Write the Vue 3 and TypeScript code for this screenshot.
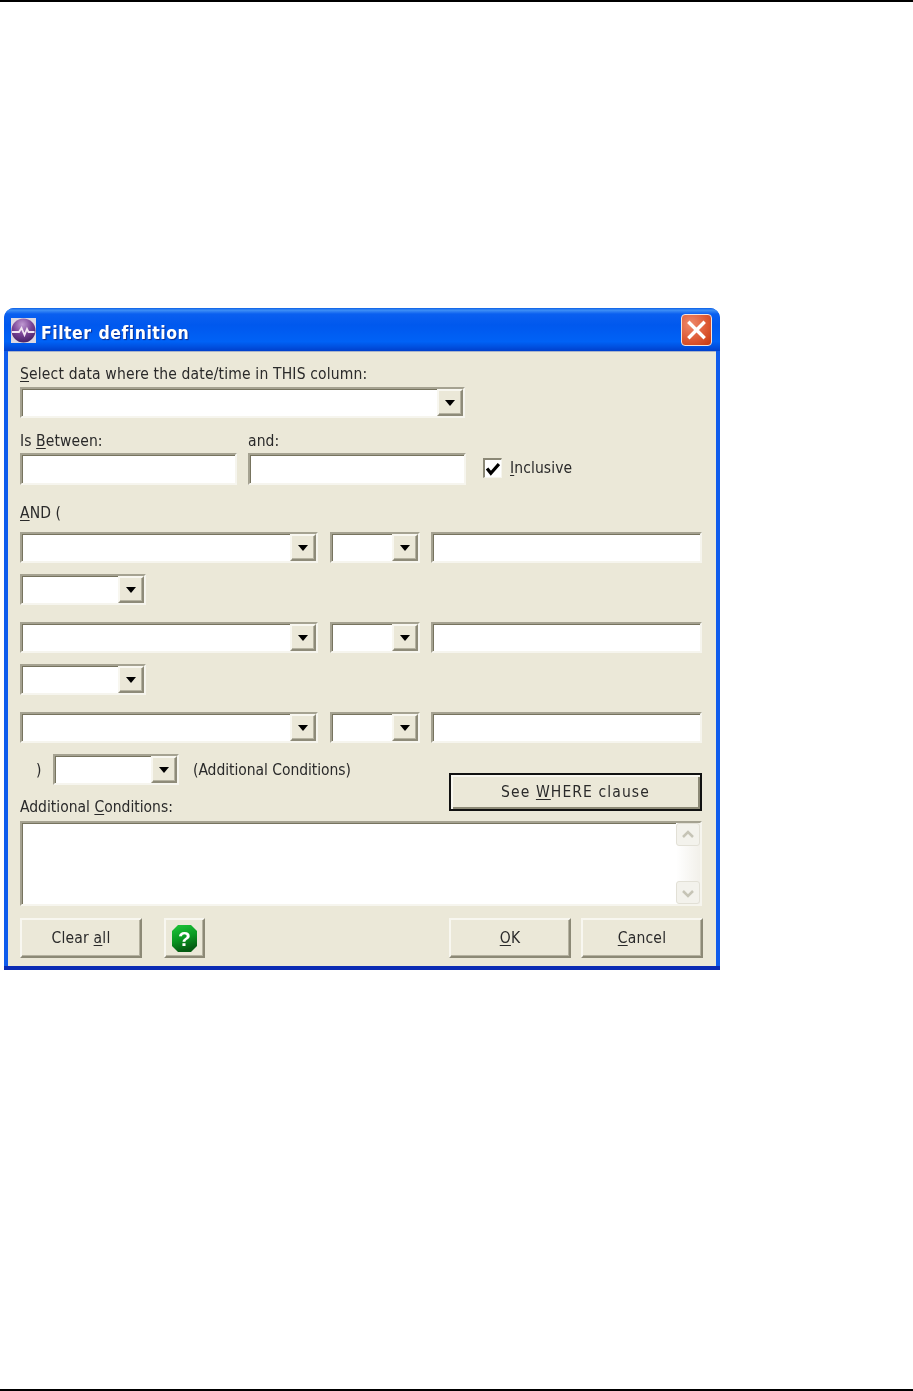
<script setup lang="ts">
const conditionRows = [
  { id: 1, joiner: true },
  { id: 2, joiner: true },
  { id: 3, joiner: false },
]
</script>

<template>
  <div class="page">
    <div class="dialog">
      <div class="titlebar">
        <svg class="app-icon" viewBox="0 0 25 25" width="25" height="25">
          <defs>
            <radialGradient id="orb" cx="0.45" cy="0.25" r="0.8">
              <stop offset="0" stop-color="#c09ad2" />
              <stop offset="0.5" stop-color="#7a4496" />
              <stop offset="1" stop-color="#401d60" />
            </radialGradient>
          </defs>
          <rect width="25" height="25" fill="#dcd8e2" />
          <circle cx="12.5" cy="12.5" r="12" fill="url(#orb)" />
          <path d="M1 14h7l2.500-4 3 7 2.500-6 1.500 3h6" fill="none" stroke="#f2e6f2" stroke-width="1.800" />
        </svg>
        <span class="title">Filter definition</span>
        <button class="close">
          <svg viewBox="0 0 31 32" width="31" height="32">
            <path d="M8.500 9l14 14M22.500 9l-14 14" stroke="#fff" stroke-width="3.400" stroke-linecap="square" />
          </svg>
        </button>
      </div>

      <div class="body">
        <label class="label top-label"><u>S</u>elect data where the date/time in THIS column:</label>
        <div class="field combo w-445 first-combo">
          <span class="drop"><i class="tri"></i></span>
        </div>

        <div class="between">
          <div>
            <label class="label">Is <u>B</u>etween:</label>
            <div class="field tall w-217"></div>
          </div>
          <div>
            <label class="label">and:</label>
            <div class="field tall w-218"></div>
          </div>
          <div class="inclusive">
            <span class="checkbox">
              <svg viewBox="0 0 13 13" width="14" height="14">
                <path d="M1 6l3.500 4.500L12 2" fill="none" stroke="#000" stroke-width="3" />
              </svg>
            </span>
            <span><u>I</u>nclusive</span>
          </div>
        </div>

        <label class="label and-label"><u>A</u>ND (</label>

        <template v-for="row in conditionRows" :key="row.id">
          <div class="condition">
            <div class="field combo w-298"><span class="drop"><i class="tri"></i></span></div>
            <div class="field combo w-90"><span class="drop"><i class="tri"></i></span></div>
            <div class="field w-271"></div>
          </div>
          <div v-if="row.joiner" class="joiner">
            <div class="field combo w-126"><span class="drop"><i class="tri"></i></span></div>
          </div>
        </template>

        <div class="closing">
          <div class="closing-left">
            <div class="paren-row">
              <span class="paren">)</span>
              <div class="field combo w-126"><span class="drop"><i class="tri"></i></span></div>
              <span class="extra">(Additional Conditions)</span>
            </div>
            <label class="label add-label">Additional <u>C</u>onditions:</label>
          </div>
          <button class="btn where">See <u>W</u>HERE clause</button>
        </div>

        <div class="field memo">
          <div class="scrollbar">
            <span class="sb-btn">
              <svg viewBox="0 0 22 22" width="22" height="22"><path d="M6 13l5-5 5 5" fill="none" stroke="#c6c4b6" stroke-width="2.500" /></svg>
            </span>
            <span class="sb-track"></span>
            <span class="sb-btn">
              <svg viewBox="0 0 22 22" width="22" height="22"><path d="M6 9l5 5 5-5" fill="none" stroke="#c6c4b6" stroke-width="2.500" /></svg>
            </span>
          </div>
        </div>

        <div class="footer">
          <button class="btn w-btn"><span>Clear <u>a</u>ll</span></button>
          <button class="btn help">
            <svg viewBox="0 0 25 27" width="25" height="27">
              <defs>
                <linearGradient id="gem" x1="0" y1="0" x2="0.3" y2="1">
                  <stop offset="0" stop-color="#1fc73a" />
                  <stop offset="0.55" stop-color="#0a9a22" />
                  <stop offset="1" stop-color="#055c12" />
                </linearGradient>
              </defs>
              <path d="M6 0h13l6 6v15l-6 6H6l-6-6V6z" fill="url(#gem)" />
              <text x="12.500" y="20.500" text-anchor="middle" class="help-mark">?</text>
            </svg>
          </button>
          <span class="spacer"></span>
          <button class="btn w-btn"><span><u>O</u>K</span></button>
          <button class="btn w-btn"><span><u>C</u>ancel</span></button>
        </div>
      </div>
    </div>
  </div>
</template>

<style>
html,
body {
  margin: 0;
  background: #fff;
}
</style>

<style scoped>
.page {
  box-sizing: border-box;
  width: 913px;
  height: 1391px;
  padding: 306px 0 0 4px;
  border-top: 2px solid #000;
  border-bottom: 2px solid #000;
  background: #fff;
  font-family: "DejaVu Sans Condensed", "DejaVu Sans", sans-serif;
  font-stretch: condensed;
  font-size: 15.500px;
  letter-spacing: 0.1px;
  color: #2a2a2a;
}

.dialog {
  width: 716px;
  height: 662px;
  display: flex;
  flex-direction: column;
  box-sizing: border-box;
  border-radius: 10px 10px 0 0;
  background: linear-gradient(180deg, #0f5cec 0, #0f5cec calc(100% - 4px), #0a2bb4 calc(100% - 4px));
  filter: blur(0.45px);
}

.titlebar {
  height: 43px;
  flex: none;
  display: flex;
  align-items: center;
  padding: 0 8px 0 7px;
  border-radius: 10px 10px 0 0;
  background: linear-gradient(180deg, #0a5fe6 0%, #3f8ff6 5%, #0a5ff0 14%, #0058ee 40%, #0062f6 78%, #0050e0 90%, #0040cc 100%);
}

.app-icon {
  flex: none;
  margin-top: 1px;
}

.title {
  margin: 6px 0 0 5px;
  font-family: "DejaVu Sans Condensed", "DejaVu Sans", sans-serif;
  font-weight: 700;
  font-size: 17.500px;
  letter-spacing: 0.5px;
  word-spacing: 1px;
  color: #fff;
  text-shadow: 1px 1px 1px #0b2a8c;
}

.close {
  margin-left: auto;
  width: 31px;
  height: 32px;
  padding: 0;
  border: 1.500px solid #f4e3dc;
  border-radius: 4px;
  background: radial-gradient(circle at 30% 30%, #ee8a6c, #dd5a35 55%, #c7380f);
  box-sizing: border-box;
  display: flex;
  align-items: center;
  justify-content: center;
}

.close svg {
  flex: none;
}

.body {
  flex: 1;
  margin: 0 4px 4px;
  padding: 11px 0 0 12px;
  background: #ebe8d8;
  border-top: 1px solid #a9b3c9;
  box-sizing: border-box;
}

.label {
  display: block;
  height: 20px;
  line-height: 22px;
  white-space: nowrap;
}

.top-label {
  letter-spacing: 0.17px;
}

u {
  text-underline-offset: 2px;
}

.field {
  box-sizing: border-box;
  height: 31px;
  flex: none;
  background: #fff;
  border-style: solid;
  border-width: 2px;
  border-color: #a5a291 #f6f5ee #f6f5ee #a5a291;
  box-shadow: inset 1px 1px 0 #77745f;
}

.first-combo {
  margin-top: 4px;
}

.tall {
  height: 32px;
  margin-top: 3px;
}

.combo {
  display: flex;
  justify-content: flex-end;
}

.drop {
  box-sizing: border-box;
  width: 26px;
  height: 100%;
  background: #ebe8d8;
  border-style: solid;
  border-width: 2px 2px 2px 2px;
  border-color: #f8f7f0 #8e8b79 #8e8b79 #f8f7f0;
  box-shadow: inset -1px -1px 0 #b5b2a0;
  display: flex;
  align-items: center;
  justify-content: center;
}

.tri {
  width: 0;
  height: 0;
  border-style: solid;
  border-width: 6px 5.500px 0;
  border-color: #000 transparent transparent;
}

.w-445 {
  width: 445px;
}

.w-217 {
  width: 217px;
}

.w-218 {
  width: 218px;
}

.w-298 {
  width: 298px;
}

.w-90 {
  width: 90px;
}

.w-271 {
  width: 271px;
}

.w-126 {
  width: 126px;
}

.between {
  display: flex;
  gap: 11px;
  margin-top: 12px;
}

.inclusive {
  display: flex;
  align-items: center;
  gap: 8px;
  margin: 28px 0 0 6px;
  height: 20px;
  line-height: 22px;
}

.checkbox {
  box-sizing: border-box;
  width: 19px;
  height: 20px;
  background: #fff;
  border-style: solid;
  border-width: 2px 1px 1px 2px;
  border-color: #8b8876 #f6f5ee #f6f5ee #8b8876;
  display: flex;
  align-items: center;
  justify-content: center;
}

.and-label {
  margin: 17px 0 10px;
}

.condition {
  display: flex;
  margin-bottom: 11px;
}

.condition .field + .field {
  margin-left: 12px;
}

.condition .field:last-child {
  margin-left: 11px;
}

.joiner {
  margin-bottom: 17px;
}

.closing {
  display: flex;
  justify-content: space-between;
  width: 682px;
}

.closing-left {
  display: flex;
  flex-direction: column;
}

.paren-row {
  display: flex;
  align-items: center;
  height: 31px;
}

.paren {
  width: 33px;
  padding-left: 16px;
  box-sizing: border-box;
}

.extra {
  margin-left: 14px;
  letter-spacing: -0.05px;
}

.add-label {
  margin-top: 11px;
  letter-spacing: 0;
}

.btn {
  box-sizing: border-box;
  padding: 0;
  font: inherit;
  color: inherit;
  background: #ebe8d8;
  border-style: solid;
  border-width: 2px;
  border-color: #f8f7f0 #8c8976 #8c8976 #f8f7f0;
  box-shadow: inset -1px -1px 0 #b5b2a0;
}

.where {
  width: 253px;
  height: 38px;
  margin-top: 19px;
  letter-spacing: 1.1px;
  border-color: #111;
  box-shadow: inset 2px 2px 0 #f8f7f0, inset -2px -2px 0 #8c8976;
}

.memo {
  width: 682px;
  height: 85px;
  margin-top: 5px;
  display: flex;
  justify-content: flex-end;
}

.scrollbar {
  width: 24px;
  height: 100%;
  display: flex;
  flex-direction: column;
  background: linear-gradient(90deg, #fff, #f2f0ea);
}

.sb-btn {
  box-sizing: border-box;
  flex: none;
  height: 23px;
  background: #f3f2ec;
  border: 1px solid #e2e0d6;
  border-radius: 3px;
  display: flex;
  align-items: center;
  justify-content: center;
}

.sb-track {
  flex: 1;
}

.footer {
  display: flex;
  align-items: stretch;
  width: 683px;
  height: 40px;
  margin-top: 12px;
}

.w-btn {
  width: 122px;
  letter-spacing: 0.2px;
}

.w-btn + .w-btn {
  margin-left: 10px;
}

.help {
  width: 41px;
  margin-left: 22px;
  display: flex;
  align-items: center;
  justify-content: center;
}

.help-mark {
  font-family: "Liberation Sans", Arial, sans-serif;
  font-weight: 700;
  font-size: 21px;
  fill: #fff;
}

.spacer {
  flex: 1;
}
</style>
